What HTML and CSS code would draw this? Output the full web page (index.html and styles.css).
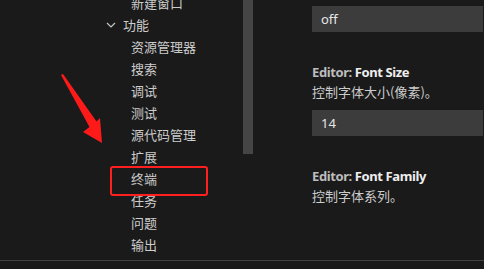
FILE: index.html
```html
<!DOCTYPE html>
<html>
<head>
<meta charset="utf-8">
<link rel="stylesheet" href="styles.css">
</head>
<body>
<div class="page">
  <div class="main">
    <div class="tree">
      <div class="item leaf">新建窗口</div>
      <div class="item group"><svg class="chev" width="10" height="10" viewBox="0 0 10 10"><path d="M1 3 L5 7 L9 3" fill="none" stroke="#c5c5c5" stroke-width="1.2"/></svg>功能</div>
      <div class="item leaf">资源管理器</div>
      <div class="item leaf">搜索</div>
      <div class="item leaf">调试</div>
      <div class="item leaf">测试</div>
      <div class="item leaf">源代码管理</div>
      <div class="item leaf">扩展</div>
      <div class="item leaf">终端</div>
      <div class="item leaf">任务</div>
      <div class="item leaf">问题</div>
      <div class="item leaf">输出</div>
      <div class="scrollbar"></div>
      <div class="highlight"></div>
      <svg class="arrow" width="60" height="90" viewBox="0 0 60 90">
        <polygon points="11,15 13,14 46.5,61.5 50,58 52,83 33,72 39.5,67" fill="#ff1a1a"/>
      </svg>
    </div>
    <div class="settings">
      <div class="setting first">
        <div class="input">off</div>
      </div>
      <div class="setting">
        <div class="title"><span class="cat">Editor: </span><span class="name">Font Size</span></div>
        <div class="desc">控制字体大小(像素)。</div>
        <div class="input">14</div>
      </div>
      <div class="setting">
        <div class="title"><span class="cat">Editor: </span><span class="name">Font Family</span></div>
        <div class="desc">控制字体系列。</div>
      </div>
    </div>
  </div>
  <div class="footer"></div>
</div>
</body>
</html>
```
FILE: styles.css
```css
html, body {
  margin: 0;
  padding: 0;
  background: #1a1a1a;
}
body {
  width: 484px;
  height: 269px;
  overflow: hidden;
  font-family: "Noto Sans", "Noto Sans CJK SC", sans-serif;
  font-size: 13px;
  color: #cccccc;
}
.page {
  display: flex;
  flex-direction: column;
  height: 269px;
}
.main {
  display: flex;
  height: 260px;
  overflow: hidden;
}
.tree {
  position: relative;
  width: 253px;
  flex: none;
  margin-top: -8px;
}
.item {
  height: 22px;
  line-height: 22px;
  white-space: nowrap;
  font-family: "Noto Sans CJK SC", sans-serif;
}
.leaf {
  padding-left: 131px;
}
.group {
  display: flex;
  align-items: center;
  padding-left: 106px;
}
.chev {
  margin-right: 7px;
}
.scrollbar {
  position: absolute;
  left: 243px;
  top: 0;
  width: 10px;
  height: 162px;
  background: #454545;
}
.highlight {
  position: absolute;
  left: 110px;
  top: 174px;
  width: 94px;
  height: 26px;
  border: 2.5px solid #ff1f1f;
  border-radius: 3px;
}
.arrow {
  position: absolute;
  left: 50px;
  top: 68px;
}
.settings {
  flex: 1;
  padding-left: 59px;
  padding-right: 1px;
}
.setting {
  padding-top: 30px;
}
.setting.first {
  padding-top: 6px;
}
.input {
  height: 26px;
  line-height: 26px;
  background: #3c3c3c;
  padding-left: 9px;
  color: #e6e6e6;
}
.title {
  height: 20px;
  line-height: 20px;
  font-weight: bold;
  letter-spacing: -0.4px;
}
.cat {
  color: #bdbdbd;
}
.name {
  color: #eeeeee;
}
.desc {
  height: 20px;
  line-height: 20px;
  margin-bottom: 8px;
  font-family: "Noto Sans CJK SC", sans-serif;
}
.footer {
  height: 1px;
  background: #424242;
}
```
